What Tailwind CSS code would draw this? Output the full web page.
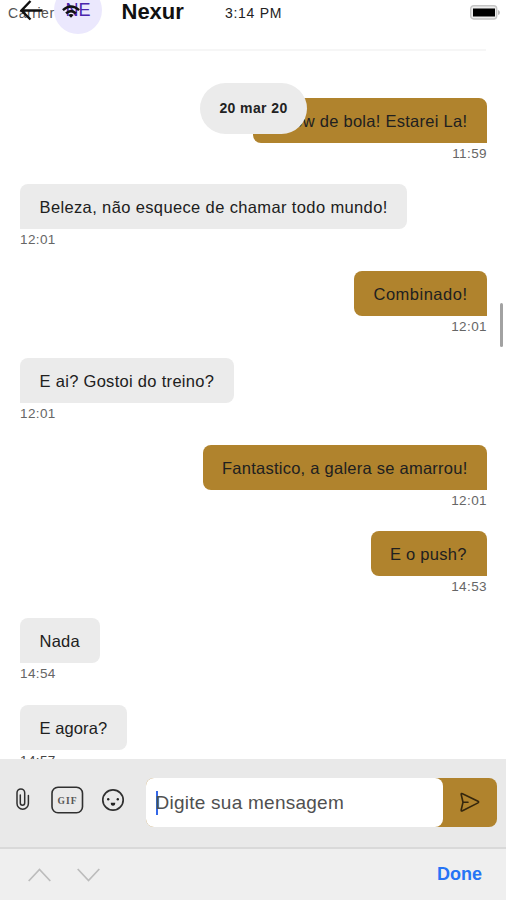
<!DOCTYPE html>
<html lang="pt-BR">
<head>
<meta charset="utf-8">
<title>Nexur</title>
<script src="https://cdn.jsdelivr.net/npm/@tailwindcss/browser@4"></script>
</head>
<body class="h-[900px] w-[506px] overflow-hidden bg-white font-['Liberation_Sans',Arial,sans-serif] text-[#202020]">
<div class="relative flex h-[900px] w-[506px] flex-col overflow-hidden">
  <header class="relative mx-5 h-[51px] shrink-0 border-b-2 border-[#f6f6f6]">
    <div class="absolute left-[34px] -top-[14px] flex h-12 w-12 items-center justify-center rounded-full bg-[#ebe8fd] text-[18px] text-[#4a25ad]"><span class="leading-[20px]">NE</span></div>
    <h1 class="absolute left-[101.500px] top-[-3px] text-[22px] leading-[30px] font-bold text-[#111]">Nexur</h1>
    <span class="absolute -left-[12px] top-[4px] text-[14px] leading-[18px] tracking-[0.550px] text-[#555]">Carrier</span>
    <svg class="absolute left-0 top-0" width="24" height="22" viewBox="0 0 24 22" fill="none" stroke="#111" stroke-width="2.400"><path d="M10.500 1 1.500 10.500l9 9M1.500 10.500H22.500"/></svg>
    <svg class="absolute left-[42px] top-[4px]" width="18" height="15" viewBox="0 0 20 16" fill="none" stroke="#111" stroke-width="2.700"><path d="M1 6.500Q10-1.500 19 6.500M4.500 10.200Q10 5 15.500 10.200"/><path d="M7 12Q10 9.500 13 12L10 15z" fill="#111" stroke="none"/></svg>
    <span class="absolute left-[205px] top-[4px] whitespace-nowrap text-[14px] leading-[18px] tracking-[0.700px] text-[#222]">3:14 PM</span>
    <svg class="absolute left-[450px] top-[5px]" width="31" height="15" viewBox="0 0 31 15"><rect x=".7" y=".7" width="26" height="13.300" rx="3" fill="#eee" stroke="#c5c5c5" stroke-width="1.400"/><rect x="3" y="3.500" width="22" height="8" fill="#000"/><path d="M28 5q2 .5 2 2.500t-2 2.500z" fill="#bbb"/></svg>
  </header>

  <main class="flex h-[708px] shrink-0 flex-col overflow-hidden px-5 pr-[19px] pt-[46.500px] text-[16.500px] leading-[45px] whitespace-nowrap">
    <section class="h-[86.800px] shrink-0 self-end text-right">
      <div class="h-[45px] w-[234px] rounded-lg rounded-br-none bg-[#b0832d] pl-[19.500px] text-left tracking-[0.270px]"><p class="pt-px">Show de bola! Estarei La!</p></div>
      <time class="mt-[2px] block text-[13.500px] leading-[18px] tracking-[0.400px] text-[#666]">11:59</time>
    </section>
    <section class="h-[86.800px] shrink-0 self-start">
      <div class="h-[45px] w-[387px] rounded-lg rounded-bl-none bg-[#ebebeb] pl-[19.500px] tracking-[0.370px]"><p class="pt-px">Beleza, não esquece de chamar todo mundo!</p></div>
      <time class="mt-[2px] block text-[13.500px] leading-[18px] tracking-[0.400px] text-[#666]">12:01</time>
    </section>
    <section class="h-[86.800px] shrink-0 self-end text-right">
      <div class="h-[45px] w-[133px] rounded-lg rounded-br-none bg-[#b0832d] pl-[19.500px] text-left tracking-[0.500px]"><p class="pt-px">Combinado!</p></div>
      <time class="mt-[2px] block text-[13.500px] leading-[18px] tracking-[0.400px] text-[#666]">12:01</time>
    </section>
    <section class="h-[86.800px] shrink-0 self-start">
      <div class="h-[45px] w-[214px] rounded-lg rounded-bl-none bg-[#ebebeb] pl-[19.500px] tracking-[0.300px]"><p class="pt-px">E ai? Gostoi do treino?</p></div>
      <time class="mt-[2px] block text-[13.500px] leading-[18px] tracking-[0.400px] text-[#666]">12:01</time>
    </section>
    <section class="h-[86.800px] shrink-0 self-end text-right">
      <div class="h-[45px] w-[284px] rounded-lg rounded-br-none bg-[#b0832d] pl-[19px] text-left tracking-[0.250px]"><p class="pt-px">Fantastico, a galera se amarrou!</p></div>
      <time class="mt-[2px] block text-[13.500px] leading-[18px] tracking-[0.400px] text-[#666]">12:01</time>
    </section>
    <section class="h-[86.800px] shrink-0 self-end text-right">
      <div class="h-[45px] w-[116px] rounded-lg rounded-br-none bg-[#b0832d] pl-[19px] text-left tracking-[0.250px]"><p class="pt-px">E o push?</p></div>
      <time class="mt-[2px] block text-[13.500px] leading-[18px] tracking-[0.400px] text-[#666]">14:53</time>
    </section>
    <section class="h-[86.800px] shrink-0 self-start">
      <div class="h-[45px] w-[80px] rounded-lg rounded-bl-none bg-[#ebebeb] pl-[19.500px] tracking-[0.250px]"><p class="pt-px">Nada</p></div>
      <time class="mt-[2px] block text-[13.500px] leading-[18px] tracking-[0.400px] text-[#666]">14:54</time>
    </section>
    <section class="h-[86.800px] shrink-0 self-start">
      <div class="h-[45px] w-[107px] rounded-lg rounded-bl-none bg-[#ebebeb] pl-[19.500px] tracking-[0.100px]"><p class="pt-px">E agora?</p></div>
      <time class="mt-[2px] block text-[13.500px] leading-[18px] tracking-[0.400px] text-[#444]">14:57</time>
    </section>
  </main>

  <div class="absolute left-[200px] top-[82.500px] flex h-[51px] w-[107px] items-center justify-center rounded-full bg-[#ebebeb] text-[14px] font-bold tracking-[0.400px] text-[#222] whitespace-nowrap">20 mar 20</div>
  <div class="absolute left-[499.500px] top-[303px] h-[44px] w-[3.500px] rounded-full bg-[#a2a2a2]"></div>

  <form class="flex h-[88px] shrink-0 items-center bg-[#e9e9e9] pl-[15px] pr-[9px]">
    <svg class="-mt-2 shrink-0" width="15" height="24" viewBox="0 0 15 24" fill="none" stroke="#303030" stroke-width="1.500" stroke-linecap="round"><path d="M9.700 7.500V16a2.200 2.200 0 0 1-4.400 0M2 8V16.500a5.700 5.700 0 0 0 11.400 0V8.500M2 9V5.800a3.850 3.850 0 0 1 7.700 0V9M5.300 8V16"/></svg>
    <svg class="-mt-1.5 ml-[21px] shrink-0" width="33" height="28" viewBox="0 0 33 28"><rect x="1" y="1.300" width="30.500" height="25.400" rx="6" fill="none" stroke="#303030" stroke-width="1.600"/><text x="16.500" y="18" text-anchor="middle" font-family="Liberation Serif, serif" font-size="9.500" font-weight="bold" letter-spacing="1" fill="#555">GIF</text></svg>
    <svg class="-mt-1.5 ml-[17px] shrink-0" width="24" height="24" viewBox="0 0 24 24"><circle cx="12" cy="12" r="10.200" fill="none" stroke="#303030" stroke-width="1.700"/><circle cx="7.200" cy="11.200" r="1.200" fill="#222"/><circle cx="16.800" cy="11.200" r="1.200" fill="#222"/><path d="M9.800 14.800h4.400q.2 3-2.200 3t-2.200-3z" fill="#222"/></svg>
    <div class="ml-[21px] -mt-px flex h-[49px] w-[351px] items-stretch rounded-lg bg-[#b0832d]">
      <div class="flex w-[297px] items-center rounded-lg bg-white pl-[9.500px]"><span class="h-[24px] w-[2.500px] bg-[#3467e8]"></span><span class="-ml-[2.500px] pt-px text-[19px] tracking-[0.250px] whitespace-nowrap text-[#505050]">Digite sua mensagem</span></div>
      <button type="button" aria-label="Enviar" class="flex flex-1 items-center justify-center"><svg width="20" height="21" viewBox="0 0 20 21" fill="none" stroke="#35270d" stroke-width="1.600" stroke-linejoin="round" stroke-linecap="round"><path d="M1.200 2.500Q1 1 2.500 1.700L18 9.300q1.300.8 0 1.600L2.500 18.800Q1 19.500 1.200 18L3 10.200zM3 10.200h5"/></svg></button>
    </div>
  </form>
  <footer class="flex h-[53px] shrink-0 items-center border-t-2 border-[#d9d9d9] bg-[#efefef] pl-[28px] pr-[24px]">
    <svg width="23" height="14" viewBox="0 0 23 14" fill="none" stroke="#bcbcbc" stroke-width="1.700"><path d="M.7 13 11.500 1.500 22.300 13"/></svg>
    <svg class="ml-[26px]" width="23" height="14" viewBox="0 0 23 14" fill="none" stroke="#bcbcbc" stroke-width="1.700"><path d="M.7 1 11.500 12.500 22.300 1"/></svg>
    <button type="button" class="ml-auto text-[18px] font-bold text-[#2674f5]">Done</button>
  </footer>
</div>
</body>
</html>
